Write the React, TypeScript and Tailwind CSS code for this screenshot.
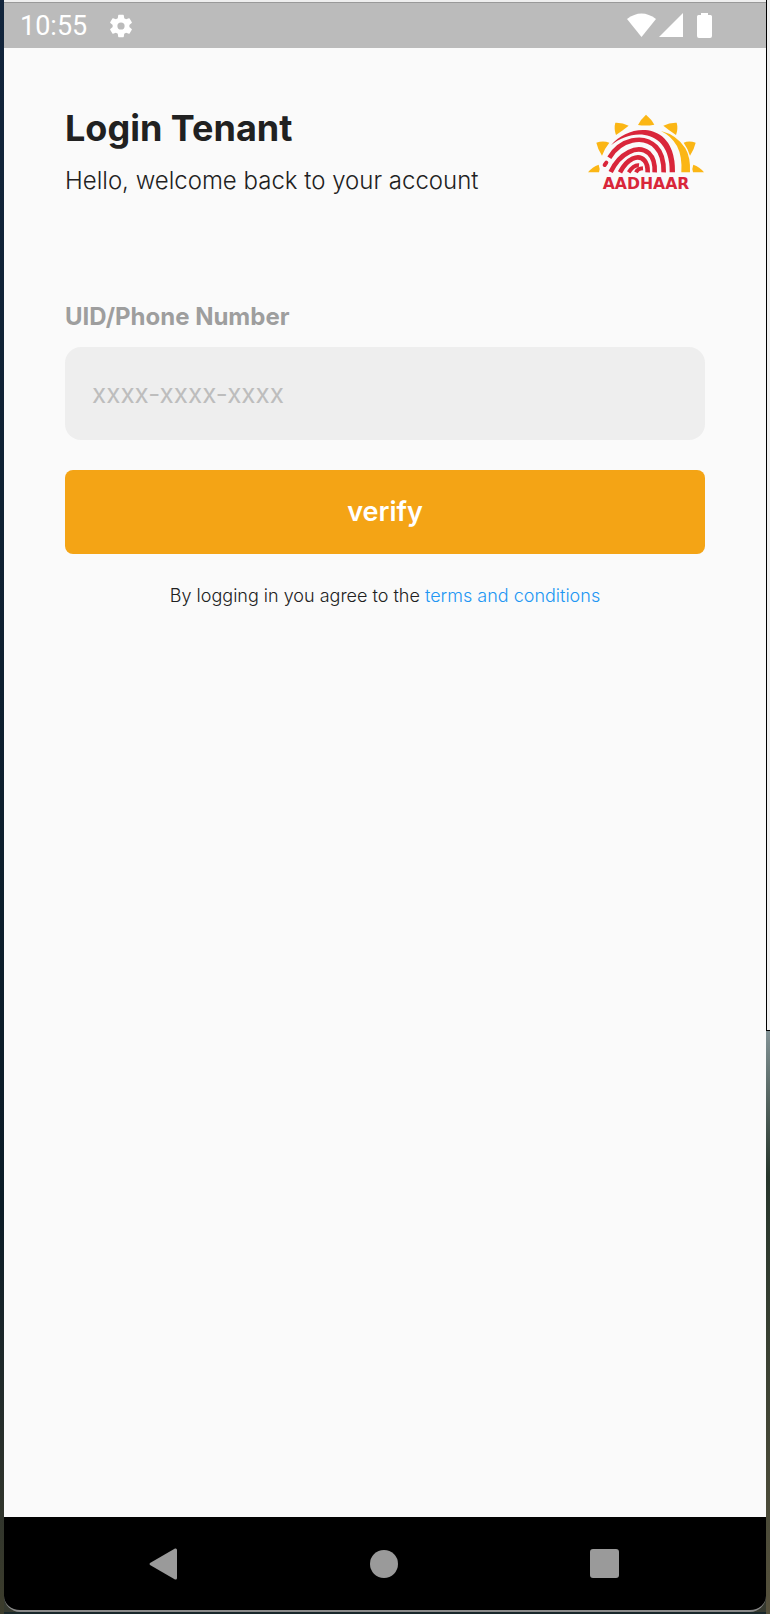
import React from "react";

function Gear() {
  return (
    <svg viewBox="0 0 24 24" className="size-7" fill="white" role="img" aria-label="Settings">
      <path d="M19.14 12.94c.04-.3.06-.61.06-.94 0-.32-.02-.64-.07-.94l2.03-1.58a.49.49 0 0 0 .12-.61l-1.92-3.32a.49.49 0 0 0-.59-.22l-2.39.96c-.5-.38-1.03-.7-1.62-.94l-.36-2.54a.48.48 0 0 0-.48-.41h-3.84c-.24 0-.43.17-.47.41l-.36 2.54c-.59.24-1.13.57-1.62.94l-2.39-.96c-.22-.08-.47 0-.59.22L2.74 8.87c-.12.21-.08.47.12.61l2.03 1.58c-.05.3-.09.63-.09.94s.02.64.07.94l-2.03 1.58a.49.49 0 0 0-.12.61l1.92 3.32c.12.22.37.29.59.22l2.39-.96c.5.38 1.03.7 1.62.94l.36 2.54c.05.24.24.41.48.41h3.84c.24 0 .44-.17.47-.41l.36-2.54c.59-.24 1.13-.56 1.62-.94l2.39.96c.22.08.47 0 .59-.22l1.92-3.32c.12-.22.07-.47-.12-.61l-2.01-1.58zM12 15.1A3.1 3.1 0 1 1 12 8.900a3.100 3.100 0 0 1 0 6.200z" />
    </svg>
  );
}

function StatusBar() {
  return (
    <header className="flex h-[46px] items-center border-t border-[#999999] bg-[#bbbbbb] pl-4 pr-[54px] text-white">
      <span className="font-[Roboto,sans-serif] text-[27px] leading-8">10:55</span>
      <span className="ml-5">
        <Gear />
      </span>
      <svg viewBox="0 0 85 25" className="ml-auto h-[25px] w-[85px]" fill="white" role="img" aria-label="Wi-Fi, signal, battery">
        <path d="M0 6Q14.500 -5 29 6L14.500 24z" />
        <path d="M56 0V24H32z" />
        <path d="M74 0h7v2h2.500a1.500 1.500 0 0 1 1.500 1.500V23a2 2 0 0 1-2 2H72a2 2 0 0 1-2-2V3.500A1.500 1.500 0 0 1 71.500 2H74z" />
      </svg>
    </header>
  );
}

function AadhaarLogo() {
  return (
    <svg viewBox="36 27 354 240" className="h-20 w-[118px] shrink-0" role="img" aria-label="Aadhaar">
      <g fill="#fbb615">
        <path d="M213 29Q230 43 238 59Q213 64 189 60Q198 42 213 29z" />
        <path d="M121 53Q142 52 161 62Q145 75 123 90Q116 70 121 53z" />
        <path d="M305 53Q284 52 265 62Q281 75 303 90Q310 70 305 53z" />
        <path d="M64 113Q84 106 103 113Q89 130 81 152Q68 132 64 113z" />
        <path d="M362 113Q342 106 326 113Q338 130 345 152Q358 132 362 113z" />
        <path d="M39 202Q52 185 71 179Q76 190 72 202z" />
        <path d="M387 202Q374 185 355 179Q350 190 354 202z" />
        <path d="M258 78Q306 90 331 130Q347 157 345 202H319Q322 154 306 123Q289 93 258 78z" />
      </g>
      <g fill="#d9263a">
        <path d="M108 121C143 78 214 57 261 94Q301 127 300 202H284Q285 140 253 110C211 74 149 87 108 121z" />
      </g>
      <g fill="none" stroke="#d9263a" strokeWidth="14">
        <path d="M103 158C137 103 205 87 243 126Q267 150 266 202" />
        <path d="M107 201C133 145 188 116 222 145Q241 163 239 202" />
        <path d="M135 202C157 160 190 147 208 166Q219 179 218 202" />
        <path d="M161 202Q176 179 192 181M183 202Q188 191 204 190" strokeWidth="12" />
        <path d="M89 180L94 173" strokeLinecap="round" strokeWidth="12" />
      </g>
      <text x="213" y="252" textAnchor="middle" fill="#d9263a" className="font-['DejaVu_Sans',sans-serif] text-[47px] font-bold">
        AADHAAR
      </text>
    </svg>
  );
}

function LoginForm() {
  return (
    <form className="mt-[104px] flex flex-col" onSubmit={(e) => e.preventDefault()}>
      <label htmlFor="uid" className="text-[24px] leading-8 font-bold text-[#9e9e9e]">
        UID/Phone Number
      </label>
      <input
        id="uid"
        type="text"
        placeholder="xxxx-xxxx-xxxx"
        className="mt-[14px] h-[93px] w-full rounded-2xl bg-[#eeeeee] px-[27px] text-[26px] text-[#212121] outline-none placeholder:text-[#bdbdbd]"
      />
      <button type="submit" className="mt-[30px] h-[84px] w-full rounded-lg bg-[#f4a415] text-[27px] font-semibold text-white">
        verify
      </button>
      <p className="mt-[30px] text-center text-[18px] leading-6 font-light text-[#212121]">
        By logging in you agree to the{" "}
        <a href="#terms" className="text-[#2196f3]">
          terms and conditions
        </a>
      </p>
    </form>
  );
}

function NavBar() {
  return (
    <nav aria-label="System" className="flex h-[95px] items-center justify-between rounded-b-2xl border-b-2 border-[#8a8a8a] bg-black pr-[147px] pl-[144px]">
      <button type="button" aria-label="Back">
        <svg viewBox="0 0 30 32" className="h-8 w-[30px]" fill="#9a9a9a">
          <path d="M27 .5Q29 0 29 2V30Q29 32 27 31.500L2 17Q1 16 2 15z" />
        </svg>
      </button>
      <button type="button" aria-label="Home" className="size-7 rounded-full bg-[#9a9a9a]" />
      <button type="button" aria-label="Recent apps" className="size-[29px] rounded-[3px] bg-[#9a9a9a]" />
    </nav>
  );
}

export default function App() {
  return (
    <div className="grid min-h-screen grid-cols-[4px_1fr_4px] bg-[#19282b] font-[Inter,sans-serif]">
      <div className="bg-linear-to-b from-[#12253c] via-[#0b1c27] via-75% to-[#3d3d2c]" />
      <div className="flex flex-col border-t-2 border-[#eeeeee] pb-0.5">
        <div className="flex flex-1 flex-col bg-[#fafafa]">
          <StatusBar />
          <main className="flex-1 px-[61px] pt-[59px]">
            <div className="flex items-start justify-between">
              <div>
                <h1 className="text-[36px] leading-[42px] font-bold text-[#212121]">Login Tenant</h1>
                <p className="mt-4 text-[24px] leading-8 font-light text-[#212121]">
                  Hello, welcome back to your account
                </p>
              </div>
              <div className="pt-[7px]">
                <AadhaarLogo />
              </div>
            </div>
            <LoginForm />
          </main>
        </div>
        <div className="bg-[#35392f]">
          <NavBar />
        </div>
      </div>
      <div className="flex flex-col">
        <div className="grow-[1031] basis-0 border-b border-l border-black bg-[#f0f0f0]" />
        <div className="grow-[583] basis-0 bg-linear-to-b from-[#839396] via-[#26352b] via-25% to-[#56513c]" />
      </div>
    </div>
  );
}
